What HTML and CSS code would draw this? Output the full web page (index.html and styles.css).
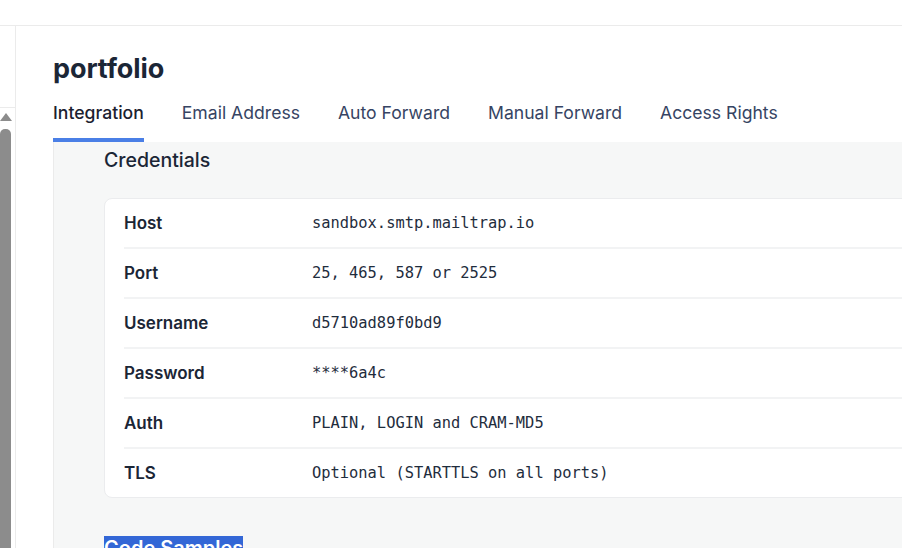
FILE: index.html
```html
<!DOCTYPE html>
<html>
<head>
<meta charset="utf-8">
<link rel="stylesheet" href="styles.css">
</head>
<body>
<div class="topbar"></div>
<div class="layout">
  <aside class="sidebar">
    <div class="sidebar-top"></div>
    <div class="scroll">
      <div class="scroll-arrow"></div>
      <div class="scroll-thumb"></div>
    </div>
  </aside>
  <main class="main">
    <h1 class="title">portfolio</h1>
    <nav class="tabs">
      <a class="tab active">Integration</a>
      <a class="tab">Email Address</a>
      <a class="tab">Auto Forward</a>
      <a class="tab">Manual Forward</a>
      <a class="tab">Access Rights</a>
    </nav>
    <section class="panel">
      <h2 class="section-title">Credentials</h2>
      <div class="card">
        <div class="row"><div class="label">Host</div><div class="value">sandbox.smtp.mailtrap.io</div></div>
        <div class="row"><div class="label">Port</div><div class="value">25, 465, 587 or 2525</div></div>
        <div class="row"><div class="label">Username</div><div class="value">d5710ad89f0bd9</div></div>
        <div class="row"><div class="label">Password</div><div class="value">****6a4c</div></div>
        <div class="row"><div class="label">Auth</div><div class="value">PLAIN, LOGIN and CRAM-MD5</div></div>
        <div class="row"><div class="label">TLS</div><div class="value">Optional (STARTTLS on all ports)</div></div>
      </div>
      <h2 class="code-title"><span class="selected">Code Samples</span></h2>
    </section>
  </main>
</div>
</body>
</html>
```

FILE: styles.css
```css
* { box-sizing: border-box; }
html, body { margin: 0; padding: 0; }
body {
  font-family: Inter, "Noto Sans", sans-serif;
  background: #ffffff;
  color: #1b2636;
  width: 902px;
  height: 548px;
  overflow: hidden;
}
.topbar {
  height: 26px;
  border-bottom: 1px solid #ebebeb;
}
.layout {
  display: flex;
  height: 522px;
  overflow: hidden;
}
.sidebar {
  width: 16px;
  flex: none;
  border-right: 1px solid #ebebeb;
  display: flex;
  flex-direction: column;
}
.sidebar-top {
  height: 82px;
  border-bottom: 1px solid #ebebeb;
}
.scroll {
  flex: 1;
  display: flex;
  flex-direction: column;
  padding: 5px 4px 0 0;
  gap: 8px;
}
.scroll-arrow {
  width: 0;
  height: 0;
  border-left: 6px solid transparent;
  border-right: 6px solid transparent;
  border-bottom: 8px solid #8c8c8c;
}
.scroll-thumb {
  flex: 1;
  width: 11px;
  margin-left: 0;
  background: #8c8c8c;
  border-radius: 5px 5px 0 0;
}
.main {
  flex: 1;
  padding-left: 37px;
  min-width: 0;
  display: flex;
  flex-direction: column;
}
.title {
  margin: 27px 0 0;
  font-size: 27px;
  line-height: 32px;
  font-weight: 700;
  color: #1b2636;
  letter-spacing: -0.1px;
}
.tabs {
  display: flex;
  gap: 38px;
  margin-top: 18px;
}
.tab {
  font-size: 17.6px;
  line-height: 20px;
  font-weight: 400;
  color: #364463;
  padding-bottom: 15px;
  border-bottom: 4px solid transparent;
  white-space: nowrap;
}
.tab.active {
  color: #1b2130;
  font-weight: 500;
  border-bottom-color: #4a7fe6;
  border-radius: 3px 3px 0 0;
}
.panel {
  flex: 1;
  background: #f6f7f7;
  border-left: 1px solid #ebebeb;
  padding: 6px 0 0 50px;
  overflow: hidden;
}
.section-title {
  margin: 0;
  font-size: 19.5px;
  line-height: 24px;
  font-weight: 500;
  color: #1b2636;
}
.card {
  margin-top: 26px;
  margin-right: -20px;
  background: #ffffff;
  border: 1px solid #ebecee;
  border-radius: 8px;
  padding-left: 19px;
}
.row {
  display: flex;
  align-items: center;
  height: 50px;
  border-bottom: 2px solid #f2f3f4;
}
.row:last-child { border-bottom: none; height: 48px; }
.label {
  width: 188px;
  flex: none;
  font-size: 17px;
  font-weight: 600;
  color: #1b2636;
}
.value {
  font-family: "DejaVu Sans Mono", "Liberation Mono", monospace;
  font-size: 15.4px;
  color: #1f2d3d;
  white-space: nowrap;
}
.code-title {
  margin: 38px 0 0;
  font-size: 20px;
  line-height: 24px;
  font-weight: 600;
}
.selected {
  background: #3367d6;
  color: #ffffff;
}
```
